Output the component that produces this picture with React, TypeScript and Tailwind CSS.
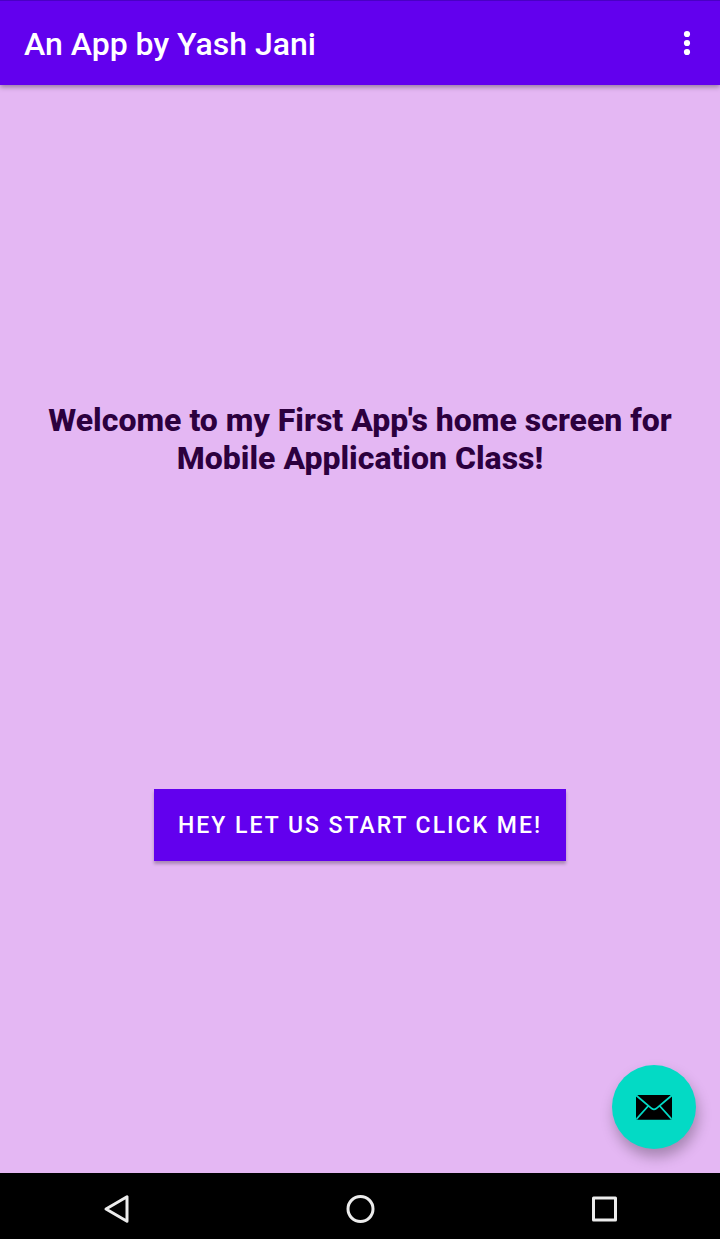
function MoreIcon() {
  return (
    <svg viewBox="0 0 36 36" className="size-9" fill="currentColor" aria-hidden="true">
      <circle cx="18" cy="9" r="3.1" />
      <circle cx="18" cy="18" r="3.1" />
      <circle cx="18" cy="27" r="3.1" />
    </svg>
  );
}

function MailIcon() {
  return (
    <svg viewBox="0 0 36 26" className="h-[26px] w-9" aria-hidden="true">
      <rect x="0" y="1" width="36" height="24.8" rx="2" fill="#000" />
      <path
        d="M0 1.2 L15.8 14.6 Q18 16.2 20.2 14.6 L36 1.2 M12.2 12 L0.6 25 M23.8 12 L35.4 25"
        fill="none"
        stroke="#03dac5"
        strokeWidth="1.8"
      />
    </svg>
  );
}

function AppBar() {
  return (
    <header className="relative z-10 flex h-[85px] items-center justify-between border-t border-[#4a00c4] bg-[#6200ee] pr-[15px] pl-6 text-white shadow-[0_2px_5px_rgba(0,0,0,0.35)]">
      <h1 className="pt-0.5 text-[32px] leading-10 font-medium">An App by Yash Jani</h1>
      <button type="button" aria-label="More options">
        <MoreIcon />
      </button>
    </header>
  );
}

function NavigationBar() {
  return (
    <nav
      aria-label="System"
      className="flex h-[66px] items-center justify-between bg-black px-20 pt-1.5 text-[#ececec]"
    >
      <button type="button" aria-label="Back" className="flex w-[74px] justify-center">
        <svg viewBox="0 0 32 32" className="size-8" fill="none" stroke="currentColor" strokeWidth="3" strokeLinejoin="round" aria-hidden="true">
          <path d="M5 16 L26 3.8 V28.2 Z" />
        </svg>
      </button>
      <button type="button" aria-label="Home" className="flex w-[74px] justify-center">
        <svg viewBox="0 0 32 32" className="size-8" fill="none" stroke="currentColor" strokeWidth="3" aria-hidden="true">
          <circle cx="16.5" cy="16" r="12.5" />
        </svg>
      </button>
      <button type="button" aria-label="Overview" className="flex w-[74px] justify-center">
        <svg viewBox="0 0 32 32" className="size-8" fill="none" stroke="currentColor" strokeWidth="3" strokeLinejoin="round" aria-hidden="true">
          <rect x="6.5" y="5" width="22" height="22" />
        </svg>
      </button>
    </nav>
  );
}

export default function App() {
  return (
    <div className="flex min-h-screen flex-col bg-[#e4b7f3] font-[Roboto,sans-serif]">
      <AppBar />
      <main className="relative flex grow flex-col items-center justify-evenly px-6 pt-1">
        <p className="text-center text-[32px] leading-[38px] font-extrabold text-[#2c003e]">
          Welcome to my First App's home screen for Mobile Application Class!
        </p>
        <button
          type="button"
          className="h-[72px] bg-[#6200ee] px-6 pt-0.5 text-[23px] font-medium tracking-[2px] text-white uppercase shadow-[0_3px_3px_rgba(0,0,0,0.25)]"
        >
          Hey let us start click me!
        </button>
        <button
          type="button"
          aria-label="Send mail"
          className="absolute right-6 bottom-6 flex size-[84px] items-center justify-center rounded-full bg-[#03dac5] shadow-[2px_8px_14px_rgba(0,0,0,0.28)]"
        >
          <MailIcon />
        </button>
      </main>
      <NavigationBar />
    </div>
  );
}
